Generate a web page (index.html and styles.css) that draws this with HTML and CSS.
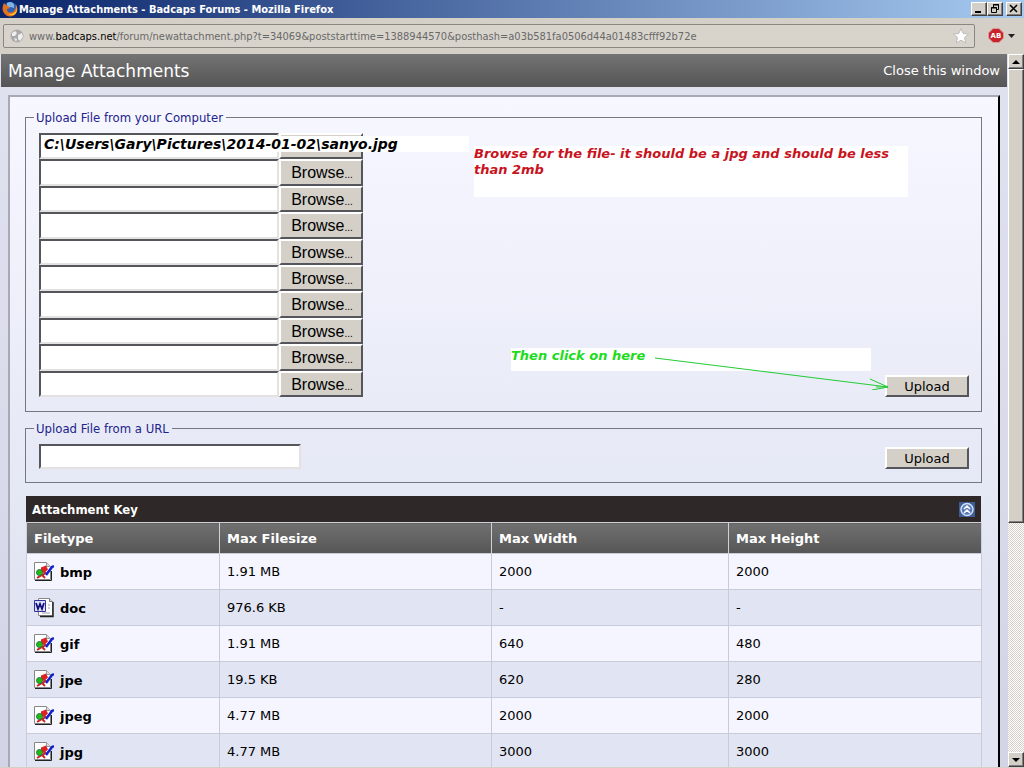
FILE: index.html
```
<!DOCTYPE html>
<html lang="en">
<head>
    <meta charset="UTF-8">
    <meta name="viewport" content="width=device-width, initial-scale=1.0">
    <title>Manage Attachments - Badcaps Forums</title>
    <link rel="stylesheet" href="styles.css">
</head>
<body>

<!-- shared icons -->
<svg class="defs" width="0" height="0" aria-hidden="true">
    <symbol id="icon-image" viewBox="0 0 20 20">
        <path d="M.5 .5h12l4 4v13H.5z" fill="#fff" stroke="#888"/>
        <path d="M12.500 .5v4h4" fill="#ddd" stroke="#999"/>
        <path d="M17.500 9v9.500H1" fill="none" stroke="#222"/>
        <path d="M7 5.500l5-2 2 4-4 3.500-3-1z" fill="#d22"/>
        <path d="M3 16l5-3 3 3M9 13l3-3" fill="none" stroke="#c22" stroke-width="2"/>
        <circle cx="5.500" cy="10.500" r="3" fill="#2b1" stroke="#274"/>
        <path d="M20 4l-2 1-6 8" fill="none" stroke="#12c" stroke-width="2.500"/>
    </symbol>
    <symbol id="icon-doc" viewBox="0 0 20 20">
        <path d="M4.500 .5h11l3 3v14h-14z" fill="#fff" stroke="#888"/>
        <path d="M15.500 .5v3h3" fill="#ddd" stroke="#777"/>
        <path d="M19 4v14.500H6" fill="none" stroke="#222" stroke-width="1.500"/>
        <path d="M14 7h2M14 10h2M8 15h8" stroke="#99a"/>
        <path d="M.5 2.500h11v11H.5z" fill="#dfe3fa" stroke="#339"/>
        <path d="M2 5l2 6 2-5 2 5 2-6" fill="none" stroke="#117" stroke-width="1.800"/>
    </symbol>
</svg>

<div class="titlebar">
    <svg class="firefox" viewBox="0 0 16 16" aria-hidden="true">
        <circle cx="8" cy="8" r="7" fill="#2a62b8"/>
        <path d="M5 2q3-2 6 0 2 2 1 5l-3-1-4 1z" fill="#7fb4e6"/>
        <path d="M2 2q-3 6 0 10 3 4 7 3.500Q15 14 15.500 8q0-3-2-5 1 4-1 6-1 3-5 2.500Q5 11 5 8l3-1-2-2Q4 5 2 2z" fill="#e8701a"/>
        <path d="M14 4q2 5-2 8-3 2-6 1 5 3 8-1 2-4 0-8z" fill="#fc3"/>
    </svg>
    <span class="title">Manage Attachments - Badcaps Forums - Mozilla Firefox</span>
    <div class="window-buttons">
        <button type="button" aria-label="Minimize"><svg viewBox="0 0 12 10"><path d="M2 8h6" stroke="#000" stroke-width="2"/></svg></button>
        <button type="button" aria-label="Restore"><svg viewBox="0 0 12 10"><path d="M4.500 3V.5h5v5H8M4 1h6M2.500 3.500h5v5h-5zM2 4h6" fill="none" stroke="#000"/></svg></button>
        <button type="button" class="close" aria-label="Close"><svg viewBox="0 0 12 10"><path d="M2 1l7 7M9 1L2 8" stroke="#000" stroke-width="1.600"/></svg></button>
    </div>
</div>

<div class="toolbar">
    <div class="address">
        <svg class="globe" viewBox="0 0 14 14" aria-hidden="true">
            <circle cx="7" cy="7" r="6.500" fill="#aaa"/>
            <path d="M2 4l3-2 2 2-2 3H2zM8 6l4-2 1 4-3 4-2-2zM4 9l3 1-1 3z" fill="#eee"/>
        </svg>
        <span class="url">www.<b>badcaps.net</b>/forum/newattachment.php?t=34069&amp;poststarttime=1388944570&amp;posthash=a03b581fa0506d44a01483cfff92b72e</span>
        <svg class="star" viewBox="0 0 18 18" aria-hidden="true">
            <path d="M9 1.500l2.200 5 5.300.5-4 3.600 1.200 5.400L9 13.200 4.300 16l1.200-5.400-4-3.600 5.300-.5z" fill="#fff" stroke="#bbb"/>
        </svg>
    </div>
    <button type="button" class="adblock" aria-label="Adblock">
        <svg width="28" height="16" viewBox="0 0 28 16">
            <path d="M5 .5h6l4.500 4.500v5L11 14.500H5L.5 10V5z" fill="#c8232b" stroke="#d99"/>
            <text x="8" y="10" text-anchor="middle" class="ab">AB</text>
            <path d="M20 6h7l-3.500 4z" fill="#222"/>
        </svg>
    </button>
</div>

<div class="viewport">
    <div class="page">
        <div class="header">
            <h1>Manage Attachments</h1>
            <a href="#">Close this window</a>
        </div>

        <form class="panel">
            <fieldset class="computer">
                <legend>Upload File from your Computer</legend>
                <div class="files">
                    <div class="file"><input type="text" aria-label="File 1"><button type="button" aria-label="Browse"></button><span class="note path">C:\Users\Gary\Pictures\2014-01-02\sanyo.jpg</span></div>
                    <div class="file"><input type="text" aria-label="File 2"><button type="button">Browse<small>...</small></button></div>
                    <div class="file"><input type="text" aria-label="File 3"><button type="button">Browse<small>...</small></button></div>
                    <div class="file"><input type="text" aria-label="File 4"><button type="button">Browse<small>...</small></button></div>
                    <div class="file"><input type="text" aria-label="File 5"><button type="button">Browse<small>...</small></button></div>
                    <div class="file"><input type="text" aria-label="File 6"><button type="button">Browse<small>...</small></button></div>
                    <div class="file"><input type="text" aria-label="File 7"><button type="button">Browse<small>...</small></button></div>
                    <div class="file"><input type="text" aria-label="File 8"><button type="button">Browse<small>...</small></button></div>
                    <div class="file"><input type="text" aria-label="File 9"><button type="button">Browse<small>...</small></button></div>
                    <div class="file"><input type="text" aria-label="File 10"><button type="button">Browse<small>...</small></button></div>
                </div>
                <button type="button" class="upload">Upload</button>
                <p class="note browse-note">Browse for the file- it should be a jpg and should be less than 2mb</p>
                <p class="note click-note">Then click on here</p>
                <svg class="arrow" width="236" height="36" viewBox="0 0 236 36" aria-hidden="true">
                    <path d="M1 4l233 29M216 25l18 8-16 3M222 33l12 0" fill="none" stroke="#2c3"/>
                </svg>
            </fieldset>

            <fieldset class="from-url">
                <legend>Upload File from a URL</legend>
                <input type="text" class="url-input" aria-label="Upload File from a URL">
                <button type="button" class="upload">Upload</button>
            </fieldset>

            <div class="key-title">
                <h2>Attachment Key</h2>
                <button type="button" class="collapse" aria-label="Collapse">
                    <svg width="16" height="15" viewBox="0 0 16 15">
                        <path d="M0 0h16v15H0z" fill="#3f5c94"/>
                        <circle cx="8" cy="7.500" r="6" fill="#5a7ab8" stroke="#cfe0fa" stroke-width="1.500"/>
                        <path d="M5 7l3-3 3 3M5 11l3-3 3 3" fill="none" stroke="#fff" stroke-width="1.500"/>
                    </svg>
                </button>
            </div>
            <table>
                <thead>
                    <tr><th class="type">Filetype</th><th class="size">Max Filesize</th><th class="width">Max Width</th><th>Max Height</th></tr>
                </thead>
                <tbody>
                    <tr><td><svg class="icon"><use href="#icon-image"/></svg><b>bmp</b></td><td>1.91 MB</td><td>2000</td><td>2000</td></tr>
                    <tr><td><svg class="icon"><use href="#icon-doc"/></svg><b>doc</b></td><td>976.6 KB</td><td>-</td><td>-</td></tr>
                    <tr><td><svg class="icon"><use href="#icon-image"/></svg><b>gif</b></td><td>1.91 MB</td><td>640</td><td>480</td></tr>
                    <tr><td><svg class="icon"><use href="#icon-image"/></svg><b>jpe</b></td><td>19.5 KB</td><td>620</td><td>280</td></tr>
                    <tr><td><svg class="icon"><use href="#icon-image"/></svg><b>jpeg</b></td><td>4.77 MB</td><td>2000</td><td>2000</td></tr>
                    <tr><td><svg class="icon"><use href="#icon-image"/></svg><b>jpg</b></td><td>4.77 MB</td><td>3000</td><td>3000</td></tr>
                </tbody>
            </table>
        </form>
    </div>

    <div class="scrollbar" aria-hidden="true">
        <div class="scroll-button"><svg viewBox="0 0 8 4"><path d="M0 4l4-4 4 4z"/></svg></div>
        <div class="thumb"></div>
        <div class="track"></div>
        <div class="scroll-button"><svg viewBox="0 0 8 4"><path d="M0 0l4 4 4-4z"/></svg></div>
    </div>
</div>

</body>
</html>
```
FILE: styles.css
```
* {
    box-sizing: border-box;
}
body {
    margin: 0;
    height: 100vh;
    display: flex;
    flex-direction: column;
    overflow: hidden;
    background: #d4d0c8;
    color: #000;
    font-family: "DejaVu Sans", Verdana, sans-serif;
    font-size: 12px;
}
button, input {
    font-family: inherit;
    margin: 0;
    padding: 0;
    border-radius: 0;
}
.defs {
    position: absolute;
}

/* browser window */
.titlebar {
    display: flex;
    align-items: center;
    flex: none;
    height: 18px;
    padding: 0 2px;
    background: linear-gradient(to right, #0a246a, #a6caf0);
    color: #fff;
}
.firefox {
    width: 16px;
    height: 16px;
}
.title {
    flex: 1;
    padding-left: 1px;
    font-family: "DejaVu Sans Condensed", "DejaVu Sans", Tahoma, sans-serif;
    font-size: 11px;
    font-weight: bold;
}
.window-buttons {
    display: flex;
}
.window-buttons button, .scroll-button, .thumb {
    background: #d4d0c8;
    border: 1px solid;
    border-color: #fff #404040 #404040 #fff;
    box-shadow: inset -1px -1px #808080;
}
.window-buttons button {
    width: 16px;
    height: 14px;
}
.window-buttons svg {
    display: block;
    width: 12px;
    height: 10px;
    margin: 0 1px;
}
.window-buttons .close {
    margin-left: 3px;
}
.toolbar {
    display: flex;
    align-items: center;
    flex: none;
    height: 36px;
    padding: 0 8px 0 3px;
}
.address {
    display: flex;
    align-items: center;
    flex: 1;
    height: 24px;
    padding: 0 4px 0 6px;
    border: 1px solid #8a8780;
    border-radius: 2px;
    background: #d8d4cc;
}
.globe {
    width: 14px;
    height: 14px;
    margin-right: 5px;
}
.url {
    flex: 1;
    color: #686868;
    font-family: "DejaVu Sans Condensed", "DejaVu Sans", Tahoma, sans-serif;
    font-size: 11px;
    white-space: nowrap;
}
.url b {
    color: #000;
    font-weight: normal;
}
.star {
    width: 18px;
    height: 18px;
}
.adblock {
    height: 16px;
    margin-left: 13px;
    border: 0;
    background: none;
}
.adblock svg {
    display: block;
}
.ab {
    fill: #fff;
    font-size: 7px;
    font-weight: bold;
}
.viewport {
    display: flex;
    flex: 1;
    min-height: 0;
    margin-bottom: 1px;
}
.scrollbar {
    display: flex;
    flex-direction: column;
    width: 16px;
}
.scroll-button {
    display: flex;
    align-items: center;
    justify-content: center;
    height: 15px;
}
.scroll-button svg {
    width: 8px;
    height: 4px;
}
.thumb {
    flex: 453;
}
.track {
    flex: 230;
    background: repeating-conic-gradient(#d4d0c8 0 25%, #fff 0 50%) 0 0 / 2px 2px;
}

/* page */
.page {
    flex: 1;
    overflow: hidden;
    padding-left: 1px;
    background: linear-gradient(#e1e2f0, #d2d4e6);
}
.header {
    display: flex;
    align-items: center;
    justify-content: space-between;
    height: 33px;
    margin-right: 1px;
    padding: 0 7px;
    background: linear-gradient(#747474, #555);
}
.header h1 {
    margin: 0;
    color: #fff;
    font-size: 17px;
    font-weight: normal;
}
.header a {
    color: #fff;
    font-size: 13px;
    text-decoration: none;
}
.panel {
    margin: 8px 8px 0 7px;
    padding: 13px 16px 16px 15px;
    border: 2px solid;
    border-color: #a9a9b4 #000 #000 #a9a9b4;
    background: linear-gradient(#f7f7ff, #e1e5f3 480px);
}
fieldset {
    position: relative;
    display: flex;
    align-items: flex-end;
    justify-content: space-between;
    margin: 0 0 9px;
    padding: 8px 12px 14px 13px;
    border: 1px solid #777780;
}
legend {
    margin-left: -5px;
    padding: 0 3px 0 2px;
    color: #22228c;
    font-family: "DejaVu Sans Condensed", "DejaVu Sans", Tahoma, sans-serif;
    font-size: 13px;
    line-height: 15px;
}
.files {
    display: grid;
    grid-template-rows: repeat(10, minmax(0, 1fr));
    height: 264px;
}
.file {
    position: relative;
    display: flex;
}
input[type="text"] {
    border: 2px solid;
    border-color: #55555c #e4e2e0 #e4e2e0 #55555c;
    background: #fff;
    font-size: 13px;
}
.file input {
    width: 240px;
}
.file button, .upload {
    width: 84px;
    border: 2px solid;
    border-color: #fff #55555c #55555c #fff;
    background: #d4d0c8;
    color: #000;
}
.file button {
    padding: 3px 0 0 2px;
    font-family: "Liberation Sans", Arial, sans-serif;
    font-size: 16px;
    line-height: 18px;
}
.file small {
    font-size: 10px;
}
.upload {
    height: 22px;
    font-size: 13px;
}
.from-url {
    margin-bottom: 13px;
    padding-bottom: 13px;
}
.url-input {
    width: 262px;
    height: 25px;
}

/* annotations */
.note {
    position: absolute;
    margin: 0;
    background: #fff;
    font-size: 13px;
    font-style: italic;
    font-weight: bold;
    line-height: 16px;
}
.path {
    top: 3px;
    left: 5px;
    width: 425px;
    font-size: 14px;
    white-space: nowrap;
}
.browse-note {
    top: 21px;
    right: 73px;
    width: 434px;
    height: 51px;
    color: #c8141e;
}
.click-note {
    right: 110px;
    bottom: 40px;
    width: 360px;
    height: 23px;
    color: #1ddc1d;
}
.arrow {
    position: absolute;
    right: 91px;
    bottom: 21px;
}

/* attachment key */
.key-title {
    display: flex;
    align-items: center;
    justify-content: space-between;
    height: 26px;
    margin: 0 1px;
    padding: 0 6px;
    background: #2e2829;
}
.key-title h2 {
    margin: 0;
    color: #fff;
    font-family: "DejaVu Sans Condensed", "DejaVu Sans", Tahoma, sans-serif;
    font-size: 13px;
}
.collapse {
    border: 0;
    background: none;
}
.collapse svg {
    display: block;
}
table {
    width: calc(100% - 1px);
    margin-left: 1px;
    table-layout: fixed;
    border-collapse: collapse;
}
th {
    height: 31px;
    padding: 0 7px;
    border: 1px solid #d0d0d8;
    border-bottom: 0;
    background: linear-gradient(#707070, #565656);
    color: #fff;
    font-size: 13px;
    text-align: left;
}
.type {
    width: 193px;
}
.size {
    width: 272px;
}
.width {
    width: 237px;
}
td {
    height: 36px;
    padding: 0 7px;
    border: 1px solid #c9cbd9;
    background: #f5f5ff;
    font-size: 13px;
}
tbody tr:nth-child(even) td {
    background: #e1e4f2;
}
td b {
    vertical-align: middle;
}
.icon {
    width: 20px;
    height: 20px;
    margin-right: 6px;
    vertical-align: middle;
}
```
